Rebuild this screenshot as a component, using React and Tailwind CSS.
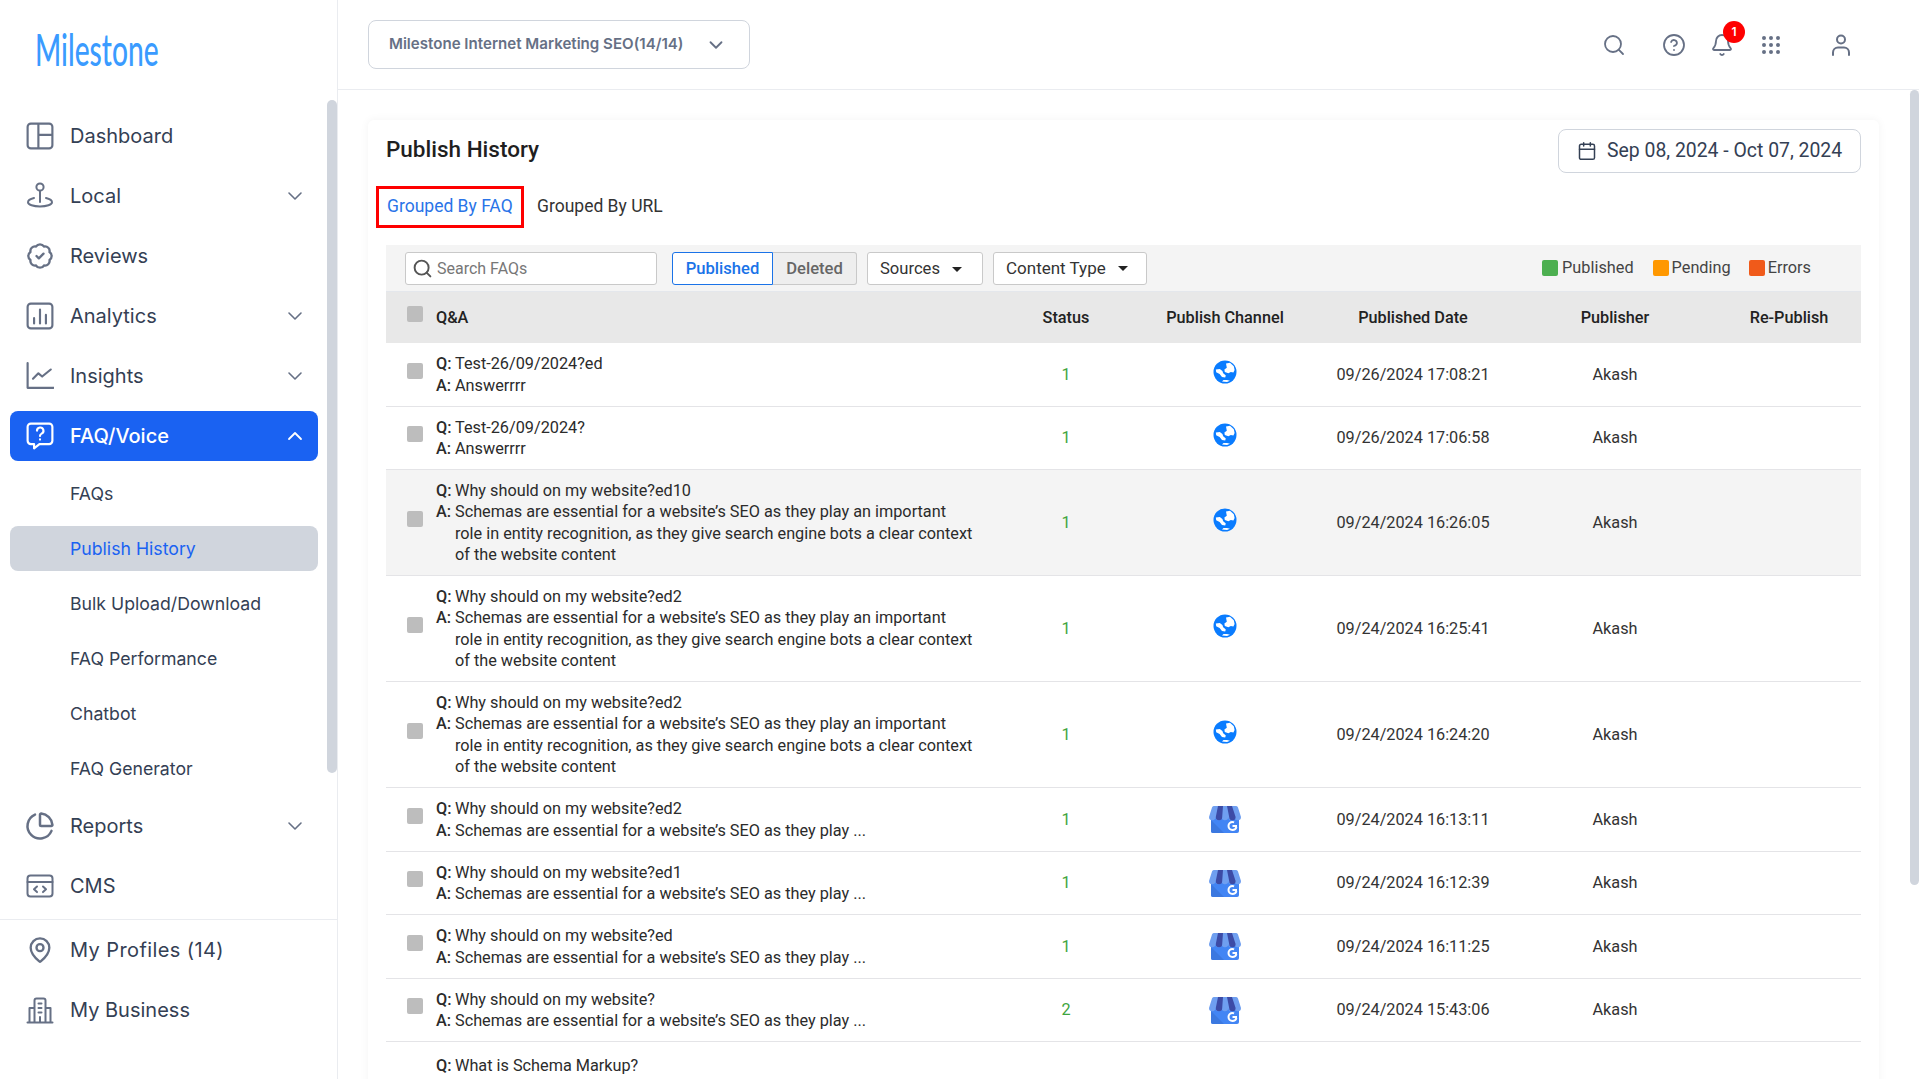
import React from 'react';
import { ChevronDown, ChevronUp, BadgeCheck, ChartPie, MapPin, Search, CircleHelp, Bell, Grip, Calendar } from 'lucide-react';

const DashboardIcon = (props) => (
  <svg viewBox="0 0 26 26" fill="none" stroke="currentColor" strokeWidth="2" {...props}>
    <rect x="1.5" y="1.5" width="23" height="23" rx="3" />
    <path d="M11.5 1.5v23M11.5 12h13" />
  </svg>
);
const LocalIcon = (props) => (
  <svg viewBox="0 0 28 28" fill="none" stroke="currentColor" strokeWidth="2" strokeLinecap="round" {...props}>
    <circle cx="14" cy="5" r="3.6" />
    <path d="M14 9v11M8 16c-3.6.8-6 2.300-6 4.300 0 2.400 5.400 4.200 12 4.200s12-1.800 12-4.200c0-2-2.400-3.500-6-4.300" />
  </svg>
);
const AnalyticsIcon = (props) => (
  <svg viewBox="0 0 26 26" fill="none" stroke="currentColor" strokeWidth="2" strokeLinecap="round" {...props}>
    <rect x="1.500" y="1.500" width="23" height="23" rx="3" />
    <path d="M7.500 15v5M13 7v13M18.500 12v8" />
  </svg>
);
const InsightsIcon = (props) => (
  <svg viewBox="0 0 26 26" fill="none" stroke="currentColor" strokeWidth="2" strokeLinecap="round" strokeLinejoin="round" {...props}>
    <path d="M1.500 1v23h24" />
    <path d="M6.500 15.500l5-5 3.500 3 8-6.500" />
  </svg>
);
const FaqIcon = (props) => (
  <svg viewBox="0 0 26 26" fill="none" stroke="currentColor" strokeWidth="2" strokeLinejoin="round" strokeLinecap="round" {...props}>
    <path d="M4.500 1.500h17a3 3 0 0 1 3 3v13a3 3 0 0 1-3 3h-9l-5 4v-4h-3a3 3 0 0 1-3-3v-13a3 3 0 0 1 3-3z" />
    <path d="M10.200 8a3 3 0 1 1 4.300 2.800c-1 .5-1.500 1.100-1.500 2.200" />
    <path d="M13 16.200v.1" />
  </svg>
);
const CmsIcon = (props) => (
  <svg viewBox="0 0 28 24" fill="none" stroke="currentColor" strokeWidth="2" strokeLinecap="round" strokeLinejoin="round" {...props}>
    <rect x="1.500" y="1.500" width="25" height="21" rx="3" />
    <path d="M1.500 8h25M11 12.500l-3 2.800 3 2.800M17 12.500l3 2.800-3 2.800" />
  </svg>
);
const BusinessIcon = (props) => (
  <svg viewBox="0 0 28 28" fill="none" stroke="currentColor" strokeWidth="2" strokeLinecap="round" strokeLinejoin="round" {...props}>
    <path d="M1.500 26.500h25M8.500 26V4.500a2 2 0 0 1 2-2h7a2 2 0 0 1 2 2V26M8.500 12H3.500v14M19.500 12h5v14" />
    <path d="M12.500 7.500h3M12.500 12h3M12.500 16.500h3M14 26v-5" />
  </svg>
);
const UserIcon = (props) => (
  <svg viewBox="0 0 24 24" fill="none" stroke="currentColor" strokeWidth="2" strokeLinecap="round" {...props}>
    <circle cx="12" cy="6.500" r="4" />
    <path d="M4 22v-2.500a5 5 0 0 1 5-5h6a5 5 0 0 1 5 5V22" />
  </svg>
);
const GlobeIcon = () => (
  <svg viewBox="0 0 24 24" className="w-[24px] h-[24px]">
    <circle cx="12" cy="12" r="11.500" fill="#0a7cff" />
    <path d="M13 3.500l4-.8 3.800 3.600.8 3.700-1.200 2.600-2.600-.6-2.400 1.200-3.600-1.200-.4-2.600 2.400-1.600z" fill="#fff" />
    <path d="M2.800 9.500l4-.6 2.600 2 .8 2.400 2.600 2.200-.6 2-3.200-.6-2.400-3-3.400-1.600z" fill="#fff" />
    <path d="M9 21.500l5 .4 3-1.200-3-.8-3.500.2z" fill="#fff" />
  </svg>
);
const GmbIcon = () => (
  <svg viewBox="0 0 32 27" className="w-8 h-[27px]">
    <path d="M2 10h28v15a2 2 0 0 1-2 2H4a2 2 0 0 1-2-2z" fill="#4285f4" />
    <path d="M2 14l13 13H4a2 2 0 0 1-2-2z" fill="#3b78e0" />
    <path d="M5 0h22a2 2 0 0 1 2 1.500L32 11a3.200 3.200 0 0 1-6.400 0 3.200 3.200 0 0 1-6.400 0 3.200 3.200 0 0 1-6.400 0 3.200 3.200 0 0 1-6.400 0A3.200 3.200 0 0 1 0 11L3 1.500A2 2 0 0 1 5 0z" fill="#6f9ff0" />
    <path d="M9 0h5l-.8 11a3.200 3.200 0 0 1-6.400 0zM18 0h5l3.600 11a3.200 3.200 0 0 1-6.400 0z" fill="#3c4ba6" />
    <circle cx="23.500" cy="20" r="4" fill="none" stroke="#fff" strokeWidth="2" strokeDasharray="19 6" strokeDashoffset="-1" />
    <path d="M23.500 20h4.500" stroke="#fff" strokeWidth="2" />
  </svg>
);

const navTop = [
  { label: 'Dashboard', icon: DashboardIcon },
  { label: 'Local', icon: LocalIcon, more: true },
  { label: 'Reviews', icon: BadgeCheck },
  { label: 'Analytics', icon: AnalyticsIcon, more: true },
  { label: 'Insights', icon: InsightsIcon, more: true },
];
const subItems = ['FAQs', 'Publish History', 'Bulk Upload/Download', 'FAQ Performance', 'Chatbot', 'FAQ Generator'];

const answer = "Schemas are essential for a website’s SEO as they play ...";
const longAnswer = "Schemas are essential for a website’s SEO as they play an important role in entity recognition, as they give search engine bots a clear context of the website content";

const rows = [
  { q: 'Test-26/09/2024?ed', a: 'Answerrrr', status: 1, web: true, date: '09/26/2024 17:08:21', h: 'h-[64px]' },
  { q: 'Test-26/09/2024?', a: 'Answerrrr', status: 1, web: true, date: '09/26/2024 17:06:58', h: 'h-[63px]' },
  { q: 'Why should on my website?ed10', a: longAnswer, status: 1, web: true, date: '09/24/2024 16:26:05', h: 'h-[106px]', hover: true },
  { q: 'Why should on my website?ed2', a: longAnswer, status: 1, web: true, date: '09/24/2024 16:25:41', h: 'h-[106px]' },
  { q: 'Why should on my website?ed2', a: longAnswer, status: 1, web: true, date: '09/24/2024 16:24:20', h: 'h-[106px]' },
  { q: 'Why should on my website?ed2', a: answer, status: 1, date: '09/24/2024 16:13:11', h: 'h-[64px]' },
  { q: 'Why should on my website?ed1', a: answer, status: 1, date: '09/24/2024 16:12:39', h: 'h-[63px]' },
  { q: 'Why should on my website?ed', a: answer, status: 1, date: '09/24/2024 16:11:25', h: 'h-[64px]' },
  { q: 'Why should on my website?', a: answer, status: 2, date: '09/24/2024 15:43:06', h: 'h-[63px]' },
  { q: 'What is Schema Markup?', a: 'Schema markup helps search engines understand your site and hits ...', status: 1, date: '', h: 'h-[64px]', cut: true },
];

const Sidebar = () => {
  const itemCls = 'flex items-center h-[50px] rounded-lg px-[16px] text-[#344054] font-["Inter",sans-serif] text-[20px] shrink-0';
  return (
    <aside className="relative w-[338px] shrink-0 h-full border-r border-[#eaecf0] bg-white overflow-hidden">
      <div className="h-[111px] pl-[35px] pt-[22px]">
        <span className='inline-block origin-left scale-x-[0.64] font-["Lato",sans-serif] font-medium text-[44px] leading-[54px] text-[#3a9bff]'>Milestone</span>
      </div>
      <nav className="flex flex-col gap-[10px] px-[10px] w-[328px]">
        {navTop.map((item) => {
          const Icon = item.icon;
          return (
            <div key={item.label} className={itemCls}>
              <Icon className="w-[28px] h-[28px] text-[#667085] shrink-0" />
              <span className="ml-[16px] flex-1">{item.label}</span>
              {item.more && <ChevronDown className="w-[24px] h-[24px] text-[#667085] mr-[-5px]" strokeWidth={1.6} />}
            </div>
          );
        })}
        <div className={`${itemCls} bg-[#1a62f2] !text-white font-medium`}>
          <FaqIcon className="w-[28px] h-[28px] shrink-0" />
          <span className="ml-[16px] flex-1">FAQ/Voice</span>
          <ChevronUp className="w-[24px] h-[24px] mr-[-5px]" strokeWidth={1.8} />
        </div>
        {subItems.map((label) => (
          <div
            key={label}
            className={`flex items-center h-[45px] rounded-lg pl-[60px] pt-[1px] text-[17.700px] font-["Inter",sans-serif] shrink-0 ${
              label === 'Publish History' ? 'bg-[#d0d5dd] text-[#1a62f2]' : 'text-[#344054]'
            }`}
          >
            {label}
          </div>
        ))}
        <div className={itemCls}>
          <ChartPie className="w-[30px] h-[30px] -mx-[1px] text-[#667085] shrink-0" />
          <span className="ml-[16px] flex-1">Reports</span>
          <ChevronDown className="w-[24px] h-[24px] text-[#667085] mr-[-5px]" strokeWidth={1.6} />
        </div>
        <div className={itemCls}>
          <CmsIcon className="w-[28px] h-[28px] text-[#667085] shrink-0" />
          <span className="ml-[16px]">CMS</span>
        </div>
      </nav>
      <div className="border-t border-[#eaecf0] mt-[8px] pt-[5px] pl-[10px] pr-[19px] flex flex-col gap-[10px]">
        <div className={itemCls}>
          <MapPin className="w-[28px] h-[28px] text-[#667085] shrink-0" />
          <span className="ml-[16px] tracking-[0.4px]">My Profiles (14)</span>
        </div>
        <div className={itemCls}>
          <BusinessIcon className="w-[28px] h-[28px] text-[#667085] shrink-0" />
          <span className="ml-[16px]">My Business</span>
        </div>
      </div>
      <div className="absolute right-0 top-[100px] h-[673px] w-[10px] rounded-md bg-[#d0d5dd]" />
    </aside>
  );
};

const Header = () => (
  <header className="h-[90px] shrink-0 border-b border-[#eaecf0] bg-white flex items-center pl-[30px] pr-[66px]">
    <div className='flex items-center w-[382px] h-[49px] border border-[#d0d5dd] rounded-lg pl-[20px] font-["Inter",sans-serif] text-[15.100px] font-semibold text-[#667085]'>
      <span>Milestone Internet Marketing SEO(14/14)</span>
      <ChevronDown className="w-[22px] h-[22px] ml-[22px] text-[#667085]" />
    </div>
    <div className="ml-auto flex items-center text-[#667085]">
      <Search className="w-[24px] h-[24px]" strokeWidth={1.8} />
      <CircleHelp className="w-[24px] h-[24px] ml-[36px]" strokeWidth={1.8} />
      <div className="relative ml-[24px]">
        <Bell className="w-[24px] h-[24px]" strokeWidth={1.8} />
        <span className='absolute -top-[12px] left-[13px] w-[22px] h-[22px] rounded-full bg-[#fe0000] text-white text-[12px] font-semibold flex items-center justify-center font-["Inter",sans-serif]'>1</span>
      </div>
      <Grip className="w-[24px] h-[24px] ml-[25px]" strokeWidth={2} />
      <UserIcon className="w-[24px] h-[24px] ml-[46px]" />
    </div>
  </header>
);

const Row = ({ row }) => (
  <div className={`grid grid-cols-[609px_142px_176px_200px_204px_142px] items-center border-b border-[#e4e4e7] text-[16.250px] ${row.h} ${row.hover ? 'bg-[#f4f4f4]' : ''}`}>
    <div className="flex items-center pl-[21px]">
      {row.cut ? <div className="w-[16px]" /> : <div className="w-[16px] h-[16px] rounded-[2px] bg-[#bdbdbd] shrink-0 -mt-[8px]" />}
      <div className={`ml-[13px] leading-[21.500px] text-[#2b2b2b] ${row.cut ? 'self-start pt-[6px]' : ''}`}>
        <div className="flex">
          <b className="w-[19px] shrink-0 font-medium">Q:</b>
          <span className="w-[520px]">{row.q}</span>
        </div>
        <div className="flex">
          <b className="w-[19px] shrink-0 font-medium">A:</b>
          <span className="w-[520px]">{row.a}</span>
        </div>
      </div>
    </div>
    <div className="text-center pt-[1px] text-[#3ea53e]">{!row.cut && row.status}</div>
    <div className={`flex justify-center ${row.web ? '-mt-[6px]' : ''}`}>
      {!row.cut && (row.web ? <GlobeIcon /> : <GmbIcon />)}
    </div>
    <div className="text-center pt-[1px] text-[#333]">{row.date}</div>
    <div className="text-center pt-[1px] text-[#333]">{!row.cut && 'Akash'}</div>
    <div />
  </div>
);

const Caret = () => <span className="ml-[12px] border-x-[5px] border-x-transparent border-t-[5px] border-t-[#222]" />;

const App = () => (
  <div className='flex h-screen w-full overflow-hidden bg-white font-["Roboto",sans-serif]'>
    <Sidebar />
    <div className="relative flex-1 min-w-0 flex flex-col h-full">
      <Header />
      <main className="flex-1 min-h-0 overflow-hidden pl-[30px] pr-[40px] pt-[30px]">
        <div className="w-[1511px] rounded-md shadow-[0_0_10px_rgba(16,24,40,0.05)] px-[18px] pt-[9px] bg-white">
          <div className="flex items-center justify-between h-[44px]">
            <h1 className="text-[22.500px] font-medium text-[#1f1f1f] -mt-[3px]">Publish History</h1>
            <div className="flex items-center h-[44px] w-[303px] border border-[#d0d5dd] rounded-lg pl-[18px] text-[19.400px] text-[#344054]">
              <Calendar className="w-[20px] h-[20px] mr-[10px] text-[#344054]" strokeWidth={1.8} />
              Sep 08, 2024 - Oct 07, 2024
            </div>
          </div>
          <div className="flex items-center mt-[13px] -ml-[10px] h-[42px] text-[17.500px]">
            <div className="flex items-center h-[42px] w-[148px] border-[3px] border-[#fe0000] pl-[8px] pb-[1px] text-[#2a74e8]">Grouped By FAQ</div>
            <div className="ml-[13px] pb-[1px] text-[#333]">Grouped By URL</div>
          </div>
          <div className="mt-[17px] flex items-center h-[47px] bg-[#f4f4f4] border-b border-[#e4e7ec] pl-[19px] pr-[50px] text-[16.600px]">
            <div className="flex items-center w-[252px] h-[33px] bg-white border border-[#c9c9c9] rounded-[3px] pl-[6px] text-[16px] text-[#777]">
              <Search className="w-[21px] h-[21px] text-[#555] mr-[4px]" strokeWidth={2.2} />
              <span className="pt-[1px]">Search FAQs</span>
            </div>
            <div className="flex h-[33px] ml-[15px]">
              <div className="w-[101px] pt-[2px] flex items-center justify-center bg-white border border-[#1a73e8] rounded-l-[3px] text-[#1a73e8] font-medium">Published</div>
              <div className="w-[84px] pt-[2px] flex items-center justify-center bg-[#eeeeee] border border-l-0 border-[#c9c9c9] rounded-r-[3px] text-[#666] font-medium">Deleted</div>
            </div>
            <div className="flex items-center w-[116px] h-[33px] ml-[10px] pl-[12px] pt-[2px] bg-white border border-[#c9c9c9] rounded-[3px] text-[#333]">
              Sources<Caret />
            </div>
            <div className="flex items-center w-[154px] h-[33px] ml-[10px] pl-[12px] pt-[1px] bg-white border border-[#c9c9c9] rounded-[3px] text-[17px] text-[#333]">
              Content Type<Caret />
            </div>
            <div className="ml-auto flex items-center text-[16.300px] text-[#444]">
              <span className="w-[16px] h-[16px] rounded-[2px] bg-[#4caf50] mr-[4px]" />Published
              <span className="w-[16px] h-[16px] rounded-[2px] bg-[#ff9800] ml-[19px] mr-[3px]" />Pending
              <span className="w-[16px] h-[16px] rounded-[2px] bg-[#f05a1a] ml-[18px] mr-[3px]" />Errors
            </div>
          </div>
          <div className="grid grid-cols-[609px_142px_176px_200px_204px_142px] items-center h-[51px] bg-[#e8e8e8] text-[16.250px] font-medium text-[#222]">
            <div className="flex items-center pl-[21px]">
              <div className="w-[16px] h-[16px] rounded-[2px] bg-[#bdbdbd] -mt-[7px]" />
              <span className="ml-[13px] pt-[1px]">Q&amp;A</span>
            </div>
            <div className="text-center pt-[1px]">Status</div>
            <div className="text-center pt-[1px]">Publish Channel</div>
            <div className="text-center pt-[1px]">Published Date</div>
            <div className="text-center pt-[1px]">Publisher</div>
            <div className="text-center pt-[1px] pl-[2px]">Re-Publish</div>
          </div>
          {rows.map((row, i) => (
            <Row key={i} row={row} />
          ))}
        </div>
      </main>
      <div className="absolute right-0 top-[90px] h-[795px] w-[9px] rounded-md bg-[#d0d5dd]" />
    </div>
  </div>
);

export default App;
